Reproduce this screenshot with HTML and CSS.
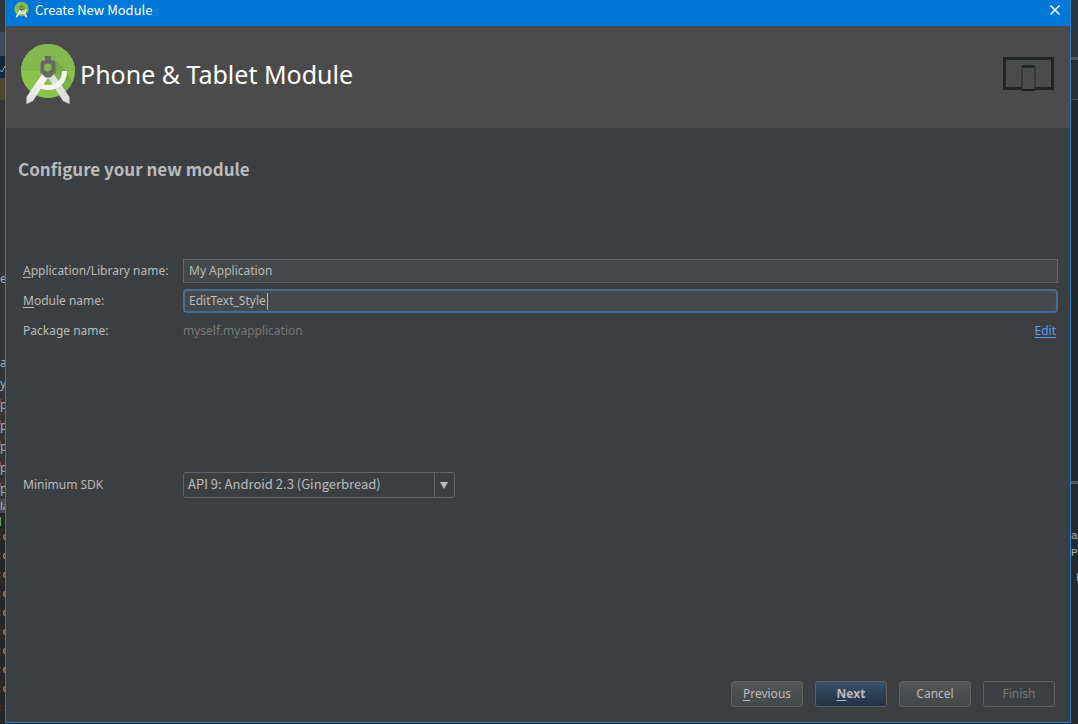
FILE: index.html
```html
<!DOCTYPE html>
<html lang="en">
<head>
<meta charset="utf-8">
<title>Create New Module</title>
<link rel="stylesheet" href="styles.css">
</head>
<body>
<svg class="defs" aria-hidden="true">
  <symbol id="studio" viewBox="0 0 54 61">
    <defs>
      <linearGradient id="leg" x1="0" y1="0" x2="0" y2="1"><stop offset="0" stop-color="#fff"/><stop offset="1" stop-color="#dcdcdc"/></linearGradient>
    </defs>
    <circle cx="27" cy="27" r="27" fill="#8bc34a"/>
    <path d="M0 27a27 27 0 0 1 54 0z" fill="#82b84e"/>
    <path d="M32 14 45 27l6 10A27 27 0 0 1 38 51L26 32z" fill="#5f963a" opacity=".4"/>
    <path d="M31.500 28 26 32 42 57 48.500 60 48.500 53z" fill="#dedede"/>
    <path d="M43.500 27C43.500 38 36 43.500 27 43.500c-4 0-7-1-10-3" fill="none" stroke="#f4f4f4" stroke-width="5"/>
    <path d="M22.500 28 28 32 12 57 5.500 60 5.500 53z" fill="url(#leg)"/>
    <path fill-rule="evenodd" d="M24 12h6v4.500h3l1.500 3v9l-5 5h-5l-5-5v-9l1.500-3h3zM27 19.500a4 4 0 1 0 0 8 4 4 0 0 0 0-8z" fill="#686868"/>
  </symbol>
</svg>
<div class="desktop">
  <div class="strip strip-left" aria-hidden="true">
    <div class="tabs"><i class="tab-blue"></i><i class="tab-navy"><svg viewBox="0 0 5 10"><path d="M0 6l2 2 3-6"/></svg></i><i class="tab-olive"></i></div>
    <div class="tree">
      <span class="first">e</span><span>a</span><span>y</span><span class="file">p</span><span class="file">p</span><span class="file">p</span><span class="file">p</span><span class="file">p</span>
    </div>
    <div class="status">la</div>
    <div class="console">
      <i class="mark"></i>
      <span>:c</span><span>:c</span><span>:c</span><span>:c</span><span>:c</span><span>:c</span><span>:c</span><span>:c</span><span>:c</span><span>::</span>
    </div>
  </div>
  <main class="dialog">
    <div class="titlebar">
      <svg class="title-icon"><use href="#studio"/></svg>
      <span class="title">Create New Module</span>
      <button class="close" type="button" aria-label="Close"><svg viewBox="0 0 10 10"><path d="M.5.5 9.500 9.500M9.500.5.5 9.500"/></svg></button>
    </div>
    <header class="banner">
      <svg class="logo"><use href="#studio"/></svg>
      <h1>Phone &amp; Tablet Module</h1>
      <svg class="devices" viewBox="0 0 51 35">
        <rect x="1.500" y="1.500" width="48" height="30" fill="none" stroke="#222524" stroke-width="3"/>
        <rect x="19" y="9" width="13" height="24" rx="1" fill="#4b4b4b" stroke="#292b2a" stroke-width="1"/>
        <path d="M19 9.500h13M19 33h13" stroke="#1c1f1e" stroke-width="2"/>
      </svg>
    </header>
    <form class="content">
      <h2>Configure your new module</h2>
      <div class="fields">
        <label for="app"><u>A</u>pplication/Library name:</label>
        <input id="app" class="box" type="text" value="My Application">
        <label for="module"><u>M</u>odule name:</label>
        <div class="focus-field">
          <input id="module" class="box focused" type="text" value="EditText_Style">
          <i class="caret"></i>
        </div>
        <span>Package name:</span>
        <div class="package"><span class="muted">myself.myapplication</span><a href="#">Edit</a></div>
      </div>
      <div class="fields sdk">
        <label for="sdk">Minimum SDK</label>
        <div class="select-wrap">
          <select id="sdk"><option>API 9: Android 2.3 (Gingerbread)</option></select>
          <span class="arrow"><svg viewBox="0 0 8 7"><path d="M0 0h8L4 7z"/></svg></span>
        </div>
      </div>
      <footer class="actions">
        <button type="button"><span><u>P</u>revious</span></button>
        <button type="button" class="primary"><span><u>N</u>ext</span></button>
        <button type="button">Cancel</button>
        <button type="button" disabled>Finish</button>
      </footer>
    </form>
  </main>
  <div class="strip strip-right" aria-hidden="true">
    <div class="panel-top"></div>
    <div class="panel-mid"></div>
    <div class="panel-low"></div>
    <div class="log"><span>a</span><span>P:</span><span class="indent">p</span></div>
  </div>
</div>
</body>
</html>
```
FILE: styles.css
```css
* { box-sizing: border-box; }
body {
  margin: 0;
  background: #242424;
  color: #bbbbbb;
  font: 12px/18px "Noto Sans", "Open Sans", sans-serif;
}
.defs { position: absolute; width: 0; height: 0; }
i { font-style: normal; }
u { text-underline-offset: 2px; }

.desktop {
  display: grid;
  grid-template-columns: 5px minmax(0, 1fr) 7px;
  height: 100vh;
  overflow: hidden;
}
.strip { overflow: hidden; display: flex; flex-direction: column; min-width: 0; }
.strip span { display: block; white-space: nowrap; }
.strip-left { background: #333536; color: #a9b0b5; }
.tabs { padding-top: 32px; }
.tabs i { display: block; overflow: hidden; height: 22px; }
.tabs .tab-blue { height: 24px; background: #414b60; }
.tabs .tab-navy { background: #0d293e; }
.tab-navy svg { display: block; width: 5px; height: 10px; margin-top: 8px; fill: none; stroke: #8aa; }
.tabs .tab-olive { background: #4a4638; }
.tree { padding-top: 168px; line-height: 21px; }
.tree .first { margin-bottom: 63px; }
.tree .file { background: linear-gradient(#8b4a3c, #8b4a3c) 0 5px / 1px 4px no-repeat; }
.status { background: #4a4d4f; height: 14px; line-height: 14px; font-size: 11px; white-space: nowrap; }
.console {
  flex: 1;
  background: #262626;
  font: 11px/19px "Liberation Mono", monospace;
  text-indent: -4px;
}
.mark { display: block; width: 1px; height: 9px; margin: 4px 0 2px; background: #6a9a6a; }

.strip-right { background: #282828; color: #b0b0b0; font: 11px/17px "Liberation Mono", monospace; }
.panel-top { height: 60px; background: #313335; border-bottom: 3px solid #555; }
.panel-mid { height: 40px; background: #2c2c2c; border-bottom: 1px solid #555; }
.panel-low { height: 384px; background: #272727; border-bottom: 3px solid #555; }
.log { padding-top: 44px; }
.log .indent { padding: 6px 0 0 5px; }

.dialog {
  display: flex;
  flex-direction: column;
  margin-bottom: 1px;
  border: 1px solid #1883d7;
  border-top: 0;
  background: #3c3f41;
}
.titlebar {
  display: flex;
  align-items: center;
  height: 26px;
  padding: 0 10px 6px 8px;
  background: #0078d7;
  color: #fff;
}
.title-icon { width: 15px; height: 16px; margin-right: 6px; }
.title { flex: 1; font-family: "Noto Sans CJK SC", sans-serif; font-size: 13px; }
.close { display: flex; padding: 0; border: 0; background: none; }
.close svg { width: 10px; height: 10px; fill: none; stroke: #fff; stroke-width: 1.5; }

.banner {
  display: flex;
  align-items: center;
  height: 102px;
  padding: 0 16px 6px 15px;
  background: #4b4b4b;
}
.logo { width: 54px; height: 61px; margin-right: 5px; }
.banner h1 { flex: 1; margin: 0; color: #fff; font-size: 25px; line-height: 32px; font-weight: 400; }
.devices { width: 51px; height: 35px; }

.content {
  flex: 1;
  display: flex;
  flex-direction: column;
  padding: 29px 12px 15px;
}
.content h2 {
  margin: 0 0 78px;
  font: 700 17px/24px "Noto Sans CJK SC", sans-serif;
}
.fields {
  display: grid;
  grid-template-columns: 159px minmax(0, 1fr);
  column-gap: 1px;
  row-gap: 6px;
  align-items: center;
  padding-left: 5px;
  grid-auto-rows: 24px;
}
.box {
  display: block;
  width: 100%;
  height: 24px;
  padding: 0 5px 2px;
  border: 1px solid #646464;
  background: #45494a;
  color: #bbbbbb;
  font: inherit;
  outline: 0;
}
.fields label, .fields > span, .package { padding-bottom: 1px; }
.focus-field { position: relative; }
.focused { border: 2px solid #466d94; border-radius: 4px; padding: 0 4px 2px; }
.caret { position: absolute; top: 4px; left: 84px; width: 1px; height: 17px; background: #bbbbbb; }
.package { display: flex; justify-content: space-between; padding-right: 2px; }
.muted { color: #777777; }
a { color: #589df6; text-underline-offset: 2px; }

.sdk { margin-top: 129px; grid-auto-rows: 26px; }
.select-wrap {
  position: relative;
  width: 272px;
  height: 26px;
}
.select-wrap select {
  appearance: none;
  width: 100%;
  height: 100%;
  padding: 0 24px 2px 4px;
  border: 1px solid #646464;
  border-radius: 3px;
  background: #3c3f41;
  color: #bbbbbb;
  font: 13px/18px "Noto Sans CJK SC", sans-serif;
}
.arrow {
  position: absolute;
  inset: 1px 1px 1px auto;
  width: 20px;
  display: flex;
  align-items: center;
  justify-content: center;
  padding-right: 1px;
  border-left: 1px solid #646464;
  pointer-events: none;
}
.arrow svg { width: 8px; height: 7px; fill: #bbbbbb; }

.actions { display: flex; justify-content: flex-end; gap: 12px; margin-top: auto; padding-right: 3px; }
.actions button {
  width: 72px;
  height: 26px;
  padding: 0 0 1px;
  border: 1px solid #5e6060;
  border-radius: 3px;
  background: linear-gradient(#525657, #434748);
  color: #bbbbbb;
  font: inherit;
}
.actions .primary { background: linear-gradient(#384f6b, #233143); font-weight: 700; }
.actions button:disabled { background: none; color: #777777; }
```
